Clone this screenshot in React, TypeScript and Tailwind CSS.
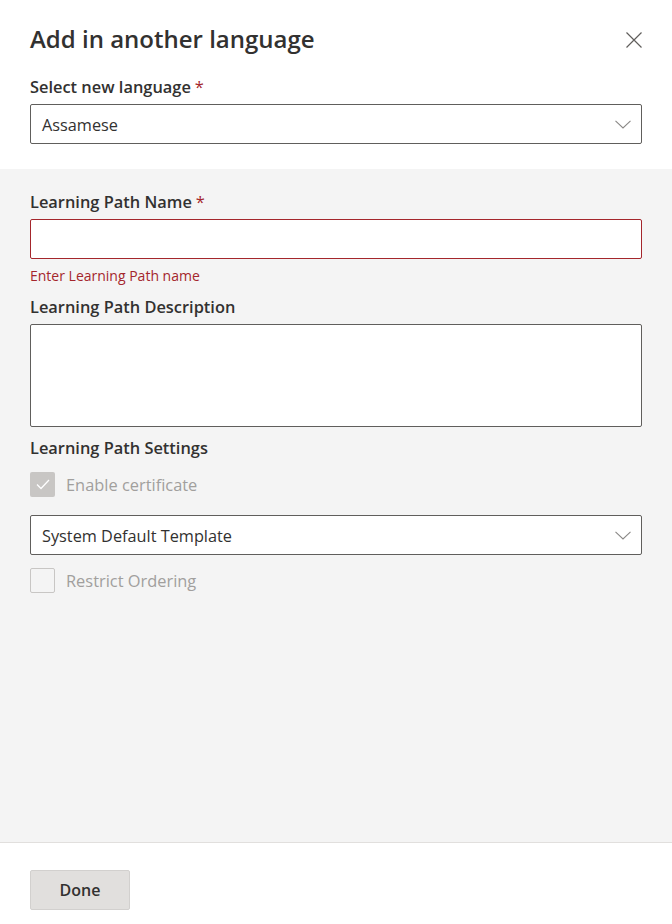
import React from "react";

const font = { fontFamily: '"Open Sans", "Noto Sans", Arial, sans-serif' };

function Chevron() {
  return (
    <svg width="16" height="9" viewBox="0 0 16 9" fill="none" className="shrink-0">
      <path d="M0.5 0.8 L8 8 L15.5 0.8" stroke="#8a8886" strokeWidth="1.1" />
    </svg>
  );
}

function Select({ value }: { value: string }) {
  return (
    <div className="h-[40px] w-full rounded-[2px] border border-[#605e5c] bg-white flex items-center justify-between pl-[11px] pr-[10px]">
      <span className="text-[16.3px] text-[#323130] leading-[22px] pt-[2px]">{value}</span>
      <Chevron />
    </div>
  );
}

function Label({ children, required }: { children: React.ReactNode; required?: boolean }) {
  return (
    <div className="text-[16.4px] font-semibold text-[#323130] leading-[22px]">
      {children}
      {required && <span className="text-[#a4262c] font-normal ml-[4px]">*</span>}
    </div>
  );
}

export default function App() {
  return (
    <div className="w-[672px] h-[924px] flex flex-col bg-white" style={font}>
      <div className="bg-white px-[30px] pt-[16px] pb-[25px]">
        <div className="h-[48px] flex items-center justify-between">
          <h1 className="text-[24px] font-semibold text-[#323130] leading-[32px] -mt-[2px]">Add in another language</h1>
          <svg width="16" height="16" viewBox="0 0 16 16">
            <path d="M0.5 0.5 L15.5 15.5 M15.5 0.5 L0.5 15.5" stroke="#605e5c" strokeWidth="1.2" />
          </svg>
        </div>
        <div className="mt-[12px]">
          <Label required>Select new language</Label>
        </div>
        <div className="mt-[6px]">
          <Select value="Assamese" />
        </div>
      </div>

      <div className="flex-1 bg-[#f4f4f4] px-[30px] pt-[22px]">
        <Label required>Learning Path Name</Label>
        <div className="mt-[6px] h-[40px] rounded-[2px] border border-[#a4262c] bg-white" />
        <div className="mt-[8px] text-[14px] leading-[18px] text-[#a4262c]">Enter Learning Path name</div>
        <div className="mt-[11px]">
          <Label>Learning Path Description</Label>
        </div>
        <div className="mt-[6px] h-[103px] rounded-[2px] border border-[#605e5c] bg-white" />
        <div className="mt-[10px]">
          <Label>Learning Path Settings</Label>
        </div>
        <div className="mt-[13px] flex items-center h-[25px]">
          <div className="w-[25px] h-[25px] rounded-[2px] bg-[#c8c6c4] flex items-center justify-center">
            <svg width="14" height="11" viewBox="0 0 14 11" fill="none">
              <path d="M1 5.5 L5 9.5 L13 1" stroke="#ffffff" strokeWidth="1.3" />
            </svg>
          </div>
          <span className="ml-[11px] text-[16.4px] text-[#a19f9d] leading-[22px]">Enable certificate</span>
        </div>
        <div className="mt-[18px]">
          <Select value="System Default Template" />
        </div>
        <div className="mt-[13px] flex items-center h-[25px]">
          <div className="w-[25px] h-[25px] rounded-[2px] border border-[#c8c6c4] bg-[#f4f4f4]" />
          <span className="ml-[11px] text-[16.4px] text-[#a19f9d] leading-[22px]">Restrict Ordering</span>
        </div>
      </div>

      <div className="h-[82px] border-t border-[#e1dfdd] bg-white px-[30px] pt-[27px]">
        <button className="w-[100px] h-[40px] rounded-[2px] border border-[#d2d0ce] bg-[#e1dfdd] text-[16px] font-semibold text-[#323130] leading-[22px]">
          Done
        </button>
      </div>
    </div>
  );
}
